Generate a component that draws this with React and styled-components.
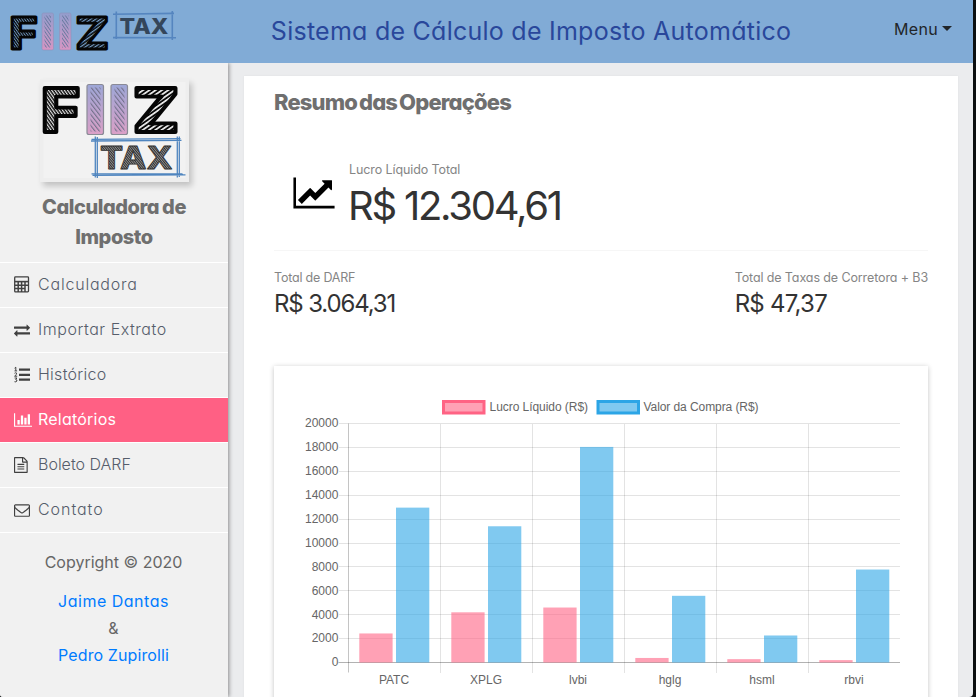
import React from 'react';
import styled, { createGlobalStyle } from 'styled-components';

const GlobalStyle = createGlobalStyle`
  * { box-sizing: border-box; }
  body {
    margin: 0;
    background: #0c0f10;
    font-family: Inter, "Liberation Sans", sans-serif;
    font-feature-settings: "cv11" 1;
    overflow: hidden;
  }
`;

const Window = styled.div`
  width: 973px;
  height: 697px;
  display: flex;
  flex-direction: column;
  background: #ebecee;
  border-radius: 0 0 4px 3px;
  overflow: hidden;
`;

const Header = styled.header`
  flex: none;
  height: 63px;
  padding: 0 21px 3px 10px;
  display: flex;
  align-items: center;
  justify-content: space-between;
  background: #81abd6;
`;

const HeaderLogo = styled.svg`
  flex: none;
  width: 170px;
  height: 48px;
  overflow: visible;
`;

const Title = styled.h1`
  margin: 2px 0 0 -12px;
  font-size: 25px;
  line-height: 36px;
  font-weight: 400;
  letter-spacing: 0.25px;
  white-space: nowrap;
  color: #29479b;
`;

const MenuButton = styled.button`
  display: flex;
  align-items: center;
  gap: 4px;
  margin-top: -3px;
  padding: 0;
  border: 0;
  background: none;
  font: inherit;
  font-size: 16px;
  letter-spacing: 0.3px;
  color: #212529;
`;

const Caret = styled.span`
  border-top: 5px solid #212529;
  border-left: 5px solid transparent;
  border-right: 5px solid transparent;
  margin-top: -1px;
`;

const Body = styled.div`
  flex: 1;
  min-height: 0;
  display: flex;
`;

const Sidebar = styled.aside`
  flex: none;
  width: 228px;
  display: flex;
  flex-direction: column;
  background: #f1f1f1;
  box-shadow: 1px 0 4px rgba(0, 0, 0, 0.42);
  clip-path: inset(0 -8px 0 0);
`;

const Brand = styled.div`
  height: 199px;
  padding-top: 16px;
  display: flex;
  flex-direction: column;
  align-items: center;
`;

const BrandLogo = styled.svg`
  flex: none;
  width: 149px;
  height: 103px;
  overflow: visible;
  margin-left: 1px;
  background: #eeeeee;
  box-shadow: 3px 4px 6px rgba(0, 0, 0, 0.2);
`;

const BrandName = styled.h2`
  margin: 10px 0 0;
  text-align: center;
  font-size: 20px;
  line-height: 30px;
  font-weight: 800;
  letter-spacing: -0.45px;
  word-spacing: -1px;
  color: #6f6f6f;
`;

const Nav = styled.nav`
  display: flex;
  flex-direction: column;
  border-top: 1px solid #fff;
`;

const NavItem = styled.a`
  height: 45px;
  padding: 0 0 1px 14px;
  display: flex;
  align-items: center;
  border-bottom: 1px solid #fff;
  font-size: 16px;
  font-weight: ${(p) => (p.$active ? 400 : 300)};
  letter-spacing: ${(p) => p.$spacing}px;
  color: ${(p) => (p.$active ? '#fff' : '#565d6b')};
  background: ${(p) => (p.$active ? '#ff6084' : 'transparent')};
  svg { color: ${(p) => (p.$active ? '#fff' : '#404040')}; }
`;

const NavLabel = styled.span`
  padding-bottom: 2px;
`;

const IconSlot = styled.span`
  width: 24px;
  height: 18px;
  display: flex;
  align-items: center;
`;

const Credits = styled.footer`
  padding: 16px 1px 0 0;
  display: flex;
  flex-direction: column;
  align-items: center;
  font-size: 16px;
  line-height: 27px;
  color: #666;
`;

const Copyright = styled.p`
  margin: 0 0 12px;
`;

const Author = styled.a`
  color: #007bff;
  letter-spacing: ${(p) => p.$spacing}px;
`;

const Main = styled.main`
  flex: 1;
  padding: 13px 15px 0 16px;
`;

const Card = styled.section`
  height: 640px;
  padding: 0 30px;
  display: flex;
  flex-direction: column;
  background: #fff;
  box-shadow: 0 0 2px rgba(0, 0, 0, 0.06);
`;

const CardTitle = styled.h3`
  margin: 11px 0 0;
  font-size: 22px;
  line-height: 30px;
  font-weight: 800;
  letter-spacing: -0.85px;
  word-spacing: -2px;
  color: #6f6f6f;
`;

const Highlight = styled.div`
  flex: none;
  height: 134px;
  padding: 43px 0 0 19px;
  display: flex;
  gap: 14px;
  border-bottom: 1px solid #f6f6f6;
`;

const TrendIcon = styled.svg`
  width: 42px;
  height: 36px;
  margin-top: 15px;
`;

const Stats = styled.div`
  display: flex;
  justify-content: space-between;
  padding-top: 17px;
`;

const Stat = styled.div`
  display: flex;
  flex-direction: column;
`;

const Label = styled.span`
  font-size: 12.5px;
  line-height: 20px;
  letter-spacing: ${(p) => p.$spacing || 0}px;
  white-space: nowrap;
  color: #858585;
`;

const Value = styled.span`
  margin-left: ${(p) => (p.$large ? -1 : 0)}px;
  font-size: ${(p) => (p.$large ? 40 : 24)}px;
  line-height: ${(p) => (p.$large ? 51 : 32)}px;
  letter-spacing: ${(p) => p.$spacing}px;
  white-space: nowrap;
  color: #333;
`;

const ChartPanel = styled.div`
  flex: none;
  height: 360px;
  margin-top: 46px;
  background: #fff;
  box-shadow: 0 1px 5px rgba(0, 0, 0, 0.24);
`;

const ChartSvg = styled.svg`
  display: block;
  font-family: "Liberation Sans", Arial, sans-serif;
  font-size: 12px;
`;

const HatchDefs = ({ id, gap, hatch, base, angle, weight }) => (
  <pattern id={id} width={gap} height={gap} patternUnits="userSpaceOnUse" patternTransform={`rotate(${angle})`}>
    <rect width={gap} height={gap} fill={base} />
    <rect width={weight} height={gap} fill={hatch} />
  </pattern>
);

const letter = { fontFamily: 'Inter, sans-serif', fontWeight: 800, strokeLinejoin: 'round' };

function SmallLogo() {
  return (
    <HeaderLogo viewBox="10 6 170 48">
      <defs>
        <HatchDefs id="hF" gap={2.2} weight={0.9} angle={-35} base="#080b0e" hatch="#7095bb" />
        <HatchDefs id="hZ" gap={2.8} weight={1.2} angle={55} base="#080b0e" hatch="#7ba3cd" />
        <linearGradient id="hG" x1="0" y1="0" x2="0" y2="1">
          <stop offset="0" stopColor="#939dcd" />
          <stop offset="1" stopColor="#d695c3" />
        </linearGradient>
        <HatchDefs id="hI" gap={2.6} weight={0.8} angle={-35} base="transparent" hatch="#63789c" />
      </defs>
      <g {...letter} fontSize="44">
        <text x="9.500" y="48.500" textLength="28" lengthAdjust="spacingAndGlyphs" fill="url(#hF)" stroke="#050505" strokeWidth="2.8">F</text>
        <text x="75.500" y="48.500" textLength="33.500" lengthAdjust="spacingAndGlyphs" fill="url(#hZ)" stroke="#050505" strokeWidth="2.8">Z</text>
      </g>
      {[42, 59.5].map((x) => (
        <g key={x}>
          <rect x={x} y="13" width="11.5" height="37" rx="1.5" fill="url(#hG)" stroke="#8f92b8" strokeWidth="0.6" />
          <rect x={x + 2.5} y="15.5" width="6.5" height="32" fill="url(#hI)" />
        </g>
      ))}
      <g stroke="#5585bf" strokeWidth="1.6" fill="none">
        <path d="M113 14.2 174 13.4M113 37.6 176 37.8M116.3 11.5V39M172.3 11V40" />
      </g>
      <text x="119.500" y="33.800" {...letter} fontSize="21.500" textLength="49" lengthAdjust="spacingAndGlyphs" fill="#34465b">TAX</text>
    </HeaderLogo>
  );
}

function LargeLogo() {
  return (
    <BrandLogo viewBox="39.500 79 149 103">
      <defs>
        <HatchDefs id="bF" gap={2.6} weight={1.2} angle={-35} base="#080808" hatch="#e4e4e4" />
        <HatchDefs id="bZ" gap={3.6} weight={1.7} angle={55} base="#080808" hatch="#f1f1f1" />
        <linearGradient id="bG" x1="0" y1="0" x2="0" y2="1">
          <stop offset="0" stopColor="#9da7d7" />
          <stop offset="1" stopColor="#dba0c7" />
        </linearGradient>
        <HatchDefs id="bI" gap={3.4} weight={1.1} angle={-38} base="transparent" hatch="#71708a" />
        <HatchDefs id="bT" gap={1.8} weight={0.7} angle={-40} base="#303030" hatch="#aaa" />
      </defs>
      <rect x="43" y="82" width="142" height="96" fill="#f2f2f2" />
      <g {...letter} fontSize="61">
        <text x="40.500" y="132" textLength="39" lengthAdjust="spacingAndGlyphs" fill="url(#bF)" stroke="#050505" strokeWidth="3.8">F</text>
        <text x="132.500" y="132" textLength="46" lengthAdjust="spacingAndGlyphs" fill="url(#bZ)" stroke="#050505" strokeWidth="3.8">Z</text>
      </g>
      {[86.500, 110.500].map((x) => (
        <g key={x}>
          <rect x={x} y="84.500" width="16.500" height="50" rx="2" fill="url(#bG)" stroke="#8a8a96" strokeWidth="1.200" />
          <rect x={x + 3.500} y="87.500" width="10" height="44" fill="url(#bI)" />
        </g>
      ))}
      <g stroke="#4f85bf" strokeWidth="1.300" fill="none">
        <path d="M91 139.300 180 138.600M90.500 141 181 140.400M91 173.800 182 173.800M92 175.300 185 174.800M94.800 136.500V177.500M96.800 137V178M176.800 136.500V177.500M178.800 136.500V177" />
      </g>
      <text x="99.500" y="168.500" {...letter} fontSize="31" textLength="72.500" lengthAdjust="spacingAndGlyphs" fill="url(#bT)" stroke="#303030" strokeWidth="0.800">TAX</text>
    </BrandLogo>
  );
}

const CalculatorIcon = () => (
  <svg width="16" height="17" viewBox="0 0 16 17" fill="none" stroke="currentColor">
    <rect x="0.7" y="0.9" width="13.800" height="15" rx="0.800" strokeWidth="1.300" />
    <path d="M0.700 5.600H14.500" strokeWidth="1.600" />
    <path d="M1 9.200H14M1 12.600H11M4.200 5.600V16M7.600 5.600V16M11 5.600V16" strokeWidth="1.500" />
  </svg>
);

const ExchangeIcon = () => (
  <svg width="16" height="16" viewBox="0 0 1792 1792" fill="currentColor">
    <path d="M1792 1184v192q0 13-9.500 22.500t-22.500 9.500h-1376v192q0 13-9.500 22.500t-22.500 9.500q-12 0-24-10l-319-320q-9-9-9-22 0-14 9-23l320-320q9-9 23-9 13 0 22.500 9.500t9.500 22.500v192h1376q13 0 22.500 9.500t9.500 22.500zm0-544q0 14-9 23l-320 320q-9 9-23 9-13 0-22.500-9.500t-9.500-22.500v-192h-1376q-13 0-22.500-9.500t-9.500-22.500v-192q0-13 9.500-22.500t22.500-9.500h1376v-192q0-14 9-23t23-9q12 0 24 10l319 319q9 9 9 23z" />
  </svg>
);

const ListIcon = () => (
  <svg width="16" height="18" viewBox="0 0 16 18">
    <path d="M5 3.700H16M5 8.800H16M5 13.700H16" stroke="currentColor" strokeWidth="2.200" />
    <path
      d="M0.600 2.200 1.800 1.200V4.800M0.500 4.900H3.100M0.500 7.300Q1.600 6.300 2.600 7.100 3.100 8.300 0.600 10.200H3.200M0.600 12H2.900L1.700 13.500Q3.200 13.600 2.900 15 2.200 16.400 0.500 15.700"
      fill="none"
      stroke="currentColor"
      strokeWidth="1"
    />
  </svg>
);

const BarsIcon = () => (
  <svg width="18.300" height="16" viewBox="0 0 2048 1792" fill="currentColor">
    <path d="M640 896v512h-256v-512h256zm384-512v1024h-256v-1024h256zm1024 1152v128h-2048v-1536h128v1408h1920zm-640-896v768h-256v-768h256zm384-384v1152h-256v-1152h256z" />
  </svg>
);

const FileIcon = () => (
  <svg width="16" height="16" viewBox="128 0 1792 1792" fill="currentColor">
    <path d="M1596 380q28 28 48 76t20 88v1152q0 40-28 68t-68 28h-1344q-40 0-68-28t-28-68v-1600q0-40 28-68t68-28h896q40 0 88 20t76 48zm-444-244v376h376q-10-29-22-41l-313-313q-12-12-41-22zm384 1528v-1024h-416q-40 0-68-28t-28-68v-416h-768v1536h1280zm-1024-864q0-14 9-23t23-9h704q14 0 23 9t9 23v64q0 14-9 23t-23 9h-704q-14 0-23-9t-9-23v-64zm736 224q14 0 23 9t9 23v64q0 14-9 23t-23 9h-704q-14 0-23-9t-9-23v-64q0-14 9-23t23-9h704zm0 256q14 0 23 9t9 23v64q0 14-9 23t-23 9h-704q-14 0-23-9t-9-23v-64q0-14 9-23t23-9h704z" />
  </svg>
);

const MailIcon = () => (
  <svg width="16" height="16" viewBox="0 0 1792 1792" fill="currentColor">
    <path d="M1664 1504v-768q-32 36-69 66-268 206-426 338-51 43-83 67t-86.500 48.500-102.500 24.500h-2q-48 0-102.500-24.500t-86.500-48.500-83-67q-158-132-426-338-37-30-69-66v768q0 13 9.500 22.500t22.500 9.500h1472q13 0 22.500-9.500t9.500-22.500zm0-1051v-24.500l-.500-13-3-12.500-5.500-9-9-7.500-14-2.500h-1472q-13 0-22.500 9.500t-9.500 22.500q0 168 147 284 193 152 401 317 6 5 35 29.500t46 37.500 44.500 31.500 50.500 27.500 43 9h2q20 0 43-9t50.500-27.500 44.500-31.500 46-37.500 35-29.500q208-165 401-317 54-43 100.500-115.500t46.500-131.500zm128-37v1088q0 66-47 113t-113 47h-1472q-66 0-113-47t-47-113v-1088q0-66 47-113t113-47h1472q66 0 113 47t47 113z" />
  </svg>
);

const NAV = [
  { label: 'Calculadora', icon: CalculatorIcon, spacing: 0.8 },
  { label: 'Importar Extrato', icon: ExchangeIcon, spacing: 0.54 },
  { label: 'Histórico', icon: ListIcon, spacing: 0.27 },
  { label: 'Relatórios', icon: BarsIcon, spacing: 0.22, active: true },
  { label: 'Boleto DARF', icon: FileIcon, spacing: 0 },
  { label: 'Contato', icon: MailIcon, spacing: 0.95 },
];

const SERIES = [
  { name: 'PATC', profit: 2430, buy: 12960 },
  { name: 'XPLG', profit: 4200, buy: 11400 },
  { name: 'lvbi', profit: 4600, buy: 18040 },
  { name: 'hglg', profit: 380, buy: 5580 },
  { name: 'hsml', profit: 280, buy: 2260 },
  { name: 'rbvi', profit: 200, buy: 7780 },
];
const LEFT = 74.5;
const BASE = 296.5;
const TOP = 57.5;
const STEP = 92;
const toHeight = (v) => (v / 20000) * (BASE - TOP);

function Chart() {
  const ticks = Array.from({ length: 11 }, (_, i) => i * 2000);
  return (
    <ChartSvg width="654" height="331" viewBox="0 0 654 331">
      <g strokeWidth="3" fillOpacity="0.6">
        <rect x="169.500" y="35.500" width="40.500" height="11.500" fill="#ff6384" stroke="#ff6384" />
        <rect x="324" y="35.500" width="40.500" height="11.500" fill="#2ca5e6" stroke="#2ca5e6" />
      </g>
      <g fill="#666">
        <text x="215.500" y="45" textLength="98.500">Lucro Líquido (R$)</text>
        <text x="369.500" y="45" textLength="115">Valor da Compra (R$)</text>
        {ticks.map((t) => (
          <text key={t} x="64.400" y={BASE - toHeight(t) + 3.800} textAnchor="end">{t}</text>
        ))}
        {SERIES.map((s, i) => (
          <text key={s.name} x={LEFT + STEP * (i + 0.5) - 0.5} y="318" textAnchor="middle">{s.name}</text>
        ))}
      </g>
      <g stroke="#000" strokeOpacity="0.11" shapeRendering="crispEdges">
        {ticks.slice(1).map((t) => (
          <path key={t} d={`M64.500 ${BASE - toHeight(t)}H626`} />
        ))}
        {SERIES.slice(1).map((s, i) => (
          <path key={s.name} d={`M${LEFT + STEP * (i + 1)} ${TOP}V306.500`} />
        ))}
      </g>
      <path d={`M${LEFT} ${TOP}V306.500`} stroke="#000" strokeOpacity="0.23" />
      <path d={`M64.500 ${BASE}H626`} stroke="#000" strokeOpacity="0.3" />
      {SERIES.map((s, i) => (
        <g key={s.name} fillOpacity="0.6">
          <rect x={LEFT + STEP * i + 10.800} y={BASE - toHeight(s.profit)} width="33.300" height={toHeight(s.profit)} fill="#ff6384" />
          <rect x={LEFT + STEP * i + 47.500} y={BASE - toHeight(s.buy)} width="33.300" height={toHeight(s.buy)} fill="#2ca5e6" />
        </g>
      ))}
    </ChartSvg>
  );
}

export default function App() {
  return (
    <Window>
      <GlobalStyle />
      <Header>
        <SmallLogo />
        <Title>Sistema de Cálculo de Imposto Automático</Title>
        <MenuButton>Menu<Caret /></MenuButton>
      </Header>
      <Body>
        <Sidebar>
          <Brand>
            <LargeLogo />
            <BrandName>Calculadora de<br />Imposto</BrandName>
          </Brand>
          <Nav>
            {NAV.map(({ label, icon: Icon, spacing, active }) => (
              <NavItem key={label} $active={active} $spacing={spacing}>
                <IconSlot><Icon /></IconSlot>
                <NavLabel>{label}</NavLabel>
              </NavItem>
            ))}
          </Nav>
          <Credits>
            <Copyright>Copyright © 2020</Copyright>
            <Author $spacing={0.5}>Jaime Dantas</Author>
            <span>&amp;</span>
            <Author $spacing={0.1}>Pedro Zupirolli</Author>
          </Credits>
        </Sidebar>
        <Main>
          <Card>
            <CardTitle>Resumo das Operações</CardTitle>
            <Highlight>
              <TrendIcon viewBox="0 0 2048 1792">
                <path d="M2048 1536v128h-2048v-1536h128v1408h1920zm-128-1248v435q0 21-19.500 29.500t-35.500-7.500l-121-121-633 633q-10 10-23 10t-23-10l-233-233-416 416-192-192 585-585q10-10 23-10t23 10l233 233 464-464-121-121q-16-16-7.500-35.500t29.500-19.500h435q14 0 23 9t9 23z" />
              </TrendIcon>
              <Stat>
                <Label $spacing={-0.1}>Lucro Líquido Total</Label>
                <Value $large $spacing={-2.25}>R$ 12.304,61</Value>
              </Stat>
            </Highlight>
            <Stats>
              <Stat>
                <Label $spacing={-0.2}>Total de DARF</Label>
                <Value $spacing={-1.15}>R$ 3.064,31</Value>
              </Stat>
              <Stat>
                <Label $spacing={-0.11}>Total de Taxas de Corretora + B3</Label>
                <Value $spacing={-0.75}>R$ 47,37</Value>
              </Stat>
            </Stats>
            <ChartPanel><Chart /></ChartPanel>
          </Card>
        </Main>
      </Body>
    </Window>
  );
}
